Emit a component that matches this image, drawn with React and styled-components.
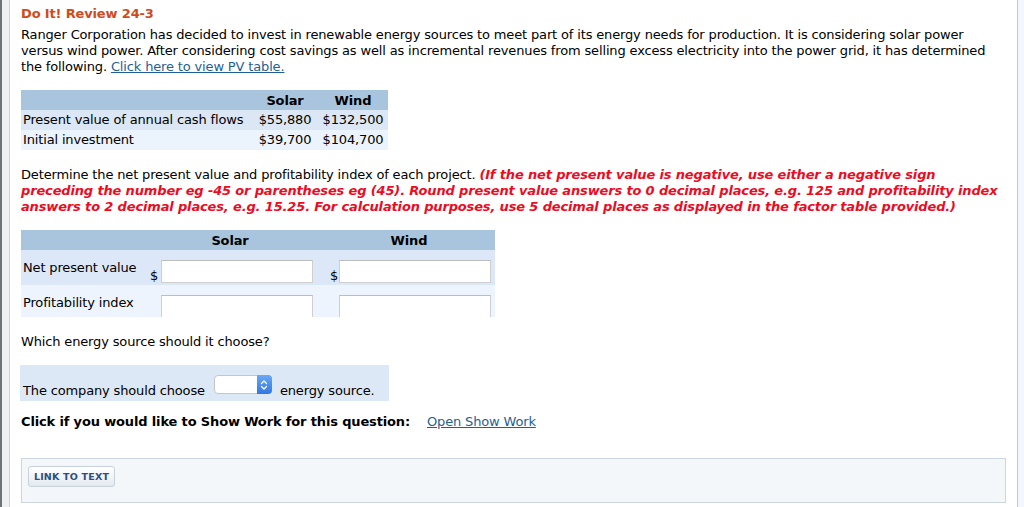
import React from "react"
import styled, { createGlobalStyle } from "styled-components"

const GlobalStyle = createGlobalStyle`
  html, body {
    margin: 0;
    padding: 0;
    background: #fff;
  }
  body {
    font-family: "DejaVu Sans", Verdana, sans-serif;
    font-size: 13px;
    letter-spacing: -0.15px;
    color: #000;
  }
`

const App = () => {
  return (
    <>
      <GlobalStyle />
      <Shell>
        <LeftRail />
        <Main>
          <Title>Do It! Review 24-3</Title>
          <Paragraph>
            Ranger Corporation has decided to invest in renewable energy sources
            to meet part of its energy needs for production. It is considering
            solar power
            <br />
            versus wind power. After considering cost savings as well as
            incremental revenues from selling excess electricity into the power
            grid, it has determined
            <br />
            the following. <Link href="#">Click here to view PV table.</Link>
          </Paragraph>

          <DataTable>
            <HeadCell />
            <HeadCell center>Solar</HeadCell>
            <HeadCell center>Wind</HeadCell>
            <DataCell tone="dark">Present value of annual cash flows</DataCell>
            <DataCell tone="dark" center>$55,880</DataCell>
            <DataCell tone="dark" center>$132,500</DataCell>
            <DataCell tone="light">Initial investment</DataCell>
            <DataCell tone="light" center>$39,700</DataCell>
            <DataCell tone="light" center>$104,700</DataCell>
          </DataTable>

          <Paragraph>
            Determine the net present value and profitability index of each
            project.{" "}
            <Warning>
              (If the net present value is negative, use either a negative sign
              <br />
              preceding the number eg -45 or parentheses eg (45). Round present
              value answers to 0 decimal places, e.g. 125 and profitability index
              <br />
              answers to 2 decimal places, e.g. 15.25. For calculation purposes,
              use 5 decimal places as displayed in the factor table provided.)
            </Warning>
          </Paragraph>

          <AnswerTable>
            <AnswerHead />
            <AnswerHead span={2}>Solar</AnswerHead>
            <AnswerHead />
            <AnswerHead span={2}>Wind</AnswerHead>
            <AnswerHead />

            <AnswerRow tone="dark" h={35}>
              <RowLabel>Net present value</RowLabel>
              <Dollar>$</Dollar>
              <AnswerInput />
              <span />
              <Dollar>$</Dollar>
              <AnswerInput />
              <span />
            </AnswerRow>

            <AnswerRow tone="light" h={32}>
              <RowLabel>Profitability index</RowLabel>
              <span />
              <AnswerInput />
              <span />
              <span />
              <AnswerInput />
              <span />
            </AnswerRow>
          </AnswerTable>

          <Question>Which energy source should it choose?</Question>

          <ChooseBox>
            <span>The company should choose</span>
            <Select>
              <SelectArrow>
                <svg width="8" height="12" viewBox="0 0 8 12" fill="none">
                  <path
                    d="M1.5 4.5 L4 2 L6.5 4.5 M1.5 7.5 L4 10 L6.5 7.5"
                    stroke="#fff"
                    strokeWidth="1.3"
                    strokeLinecap="round"
                    strokeLinejoin="round"
                  />
                </svg>
              </SelectArrow>
            </Select>
            <span>energy source.</span>
          </ChooseBox>

          <ShowWork>
            <strong>Click if you would like to Show Work for this question:</strong>
            <Link href="#">Open Show Work</Link>
          </ShowWork>

          <LinkPanel>
            <LinkButton>LINK TO TEXT</LinkButton>
          </LinkPanel>
        </Main>
        <RightRail />
      </Shell>
    </>
  )
}

export default App

const Shell = styled.div`
  display: flex;
  height: 507px;
  overflow: hidden;
`

const LeftRail = styled.div`
  width: 7px;
  flex: none;
  background: #eef0f2;
  border-left: 2px solid #6f7377;
  border-right: 1px solid #cfd3d7;
`

const RightRail = styled.div`
  width: 6px;
  flex: none;
  background: #f3f6fa;
  border-left: 1px solid #c3c7cb;
`

const Main = styled.div`
  flex: 1;
  min-width: 0;
  padding: 6px 11px 0 11px;
  background: #fff;
`

const Title = styled.h2`
  margin: 0 0 5px;
  font-size: 13px;
  line-height: 16px;
  font-weight: bold;
  color: #cf4a1e;
`

const Paragraph = styled.p`
  margin: 0 0 15px;
  line-height: 16px;
  white-space: nowrap;
`

const Link = styled.a`
  color: #1f5f95;
  text-decoration: underline;
`

const Warning = styled.em`
  color: #ec0b1f;
  font-weight: bold;
  font-style: italic;
`

const DataTable = styled.div`
  display: grid;
  grid-template-columns: 231px 66px 70px;
  width: 367px;
  margin-bottom: 17px;
`

const HeadCell = styled.div`
  height: 20px;
  line-height: 21px;
  background: #a8c5dd;
  font-weight: bold;
  text-align: ${(p) => (p.center ? "center" : "left")};
`

const DataCell = styled.div`
  height: 20px;
  line-height: 20px;
  padding-left: ${(p) => (p.center ? "0" : "2px")};
  background: ${(p) => (p.tone === "dark" ? "#dbe7f5" : "#ebf3fd")};
  text-align: ${(p) => (p.center ? "center" : "left")};
  white-space: nowrap;
`

const AnswerTable = styled.div`
  display: grid;
  grid-template-columns: 126px 14px 152px 14px 12px 152px 4px;
  width: 474px;
`

const AnswerHead = styled.div`
  grid-column: span ${(p) => p.span || 1};
  height: 20px;
  line-height: 21px;
  background: #a8c5dd;
  font-weight: bold;
  text-align: center;
`

const AnswerRow = styled.div`
  grid-column: 1 / -1;
  display: grid;
  grid-template-columns: subgrid;
  height: ${(p) => p.h}px;
  overflow: hidden;
  background: ${(p) => (p.tone === "dark" ? "#dce8f7" : "#edf4fd")};
`

const RowLabel = styled.div`
  padding: 10px 0 0 2px;
  line-height: 16px;
  white-space: nowrap;
`

const Dollar = styled.div`
  align-self: end;
  padding: 0 0 1px 3px;
  line-height: 16px;
`

const AnswerInput = styled.input`
  box-sizing: border-box;
  width: 152px;
  height: 23px;
  margin: 10px 0 0;
  padding: 0 4px;
  border: 1px solid #cfcfcf;
  border-top-color: #bdbdbd;
  background: #fff;
  font: inherit;
  outline: none;
`

const Question = styled.p`
  margin: 17px 0 15px;
  line-height: 16px;
`

const ChooseBox = styled.div`
  box-sizing: border-box;
  display: flex;
  align-items: flex-end;
  gap: 9px;
  width: 369px;
  height: 36px;
  margin-left: -1px;
  padding: 0 3px 2px;
  background: #dde8f6;
  line-height: 16px;
`

const Select = styled.div`
  position: relative;
  box-sizing: border-box;
  width: 58px;
  height: 19px;
  margin: 0 -1px 5px 0;
  background: #fff;
  border: 1px solid #c2c7cd;
  border-radius: 4px;
`

const SelectArrow = styled.div`
  position: absolute;
  top: -1px;
  right: -1px;
  bottom: -1px;
  width: 15px;
  display: flex;
  align-items: center;
  justify-content: center;
  border-radius: 0 4px 4px 0;
  background: linear-gradient(#6aa8f4, #2f78e4);
`

const ShowWork = styled.div`
  display: flex;
  gap: 17px;
  margin-top: 13px;
  line-height: 16px;

  strong {
    font-weight: bold;
  }
`

const LinkPanel = styled.div`
  box-sizing: border-box;
  height: 45px;
  margin-top: 28px;
  padding: 7px 6px;
  background: #f4f7fa;
  border: 1px solid #cdd5df;
`

const LinkButton = styled.button`
  box-sizing: border-box;
  width: 87px;
  height: 21px;
  padding: 0;
  border: 1px solid #c9d1da;
  border-radius: 3px;
  background: linear-gradient(#ffffff, #e3e9f0);
  color: #2d4f80;
  font-family: "DejaVu Sans", Verdana, sans-serif;
  font-size: 9.5px;
  font-weight: bold;
  letter-spacing: 0.2px;
  cursor: pointer;
`
